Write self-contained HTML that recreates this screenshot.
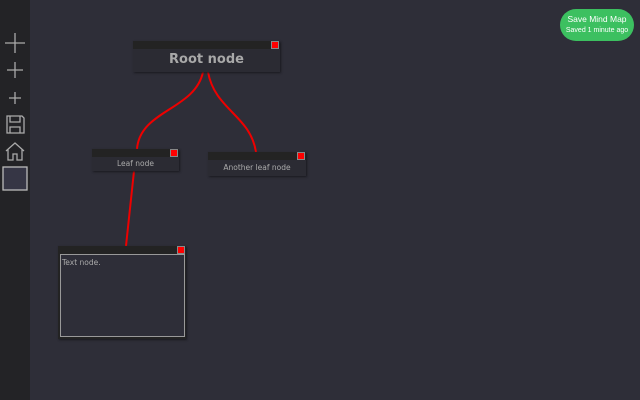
<!DOCTYPE html><html><head><style>
body{margin:0;width:640px;height:400px;background:#2e2e38;position:relative;overflow:hidden;font-family:"DejaVu Sans","Liberation Sans",sans-serif}
.sb{position:absolute;left:0;top:0;width:30px;height:400px;background:#232326}
.n{position:absolute;background:#2b2b33;box-shadow:1px 1px 2px #1a1a1f}
.h{height:8px;background:#232323;position:relative}
.x{position:absolute;right:1px;top:0;width:6px;height:6px;background:#f00;border:1px solid #888}
.t{color:#aaa;text-align:center}
</style></head><body>
<div class="sb"></div>
<svg width="30" height="200" style="position:absolute;left:0;top:0">
<g stroke="#aaa" stroke-width="1.3" fill="none">
<path d="M5 43H25M15 33V53"/><path d="M7 70H23M15 62V78"/><path d="M9 98H21M15 92V104"/>
<path d="M7 116H22L24 118V133H7Z M10 116V122H20V116 M10 133V127H20V133"/>
<path d="M6 151L15 143L24 151M8 149V160H13V154H17V160H22V149"/>
</g>
<rect x="3" y="167" width="24" height="23" fill="#363645" stroke="#bbb" stroke-width="1.3"/>
</svg>
<svg width="640" height="400" style="position:absolute;left:0;top:0">
<g stroke="#e00" stroke-width="2" fill="none">
<path d="M203 72C195 110 140 110 137 149"/>
<path d="M208 72C215 110 250 115 256 152"/>
<path d="M134 171L126 246"/>
</g></svg>
<div class="n" style="left:133px;top:41px;width:147px;height:31px"><div class="h"><div class="x"></div></div><div class="t" style="font-size:13px;font-weight:bold;line-height:22px;color:#a8a8a8">Root node</div></div>
<div class="n" style="left:92px;top:149px;width:87px;height:22px"><div class="h"><div class="x"></div></div><div class="t" style="font-size:7.5px;line-height:13px">Leaf node</div></div>
<div class="n" style="left:208px;top:152px;width:98px;height:24px"><div class="h"><div class="x"></div></div><div class="t" style="font-size:7.5px;line-height:16px">Another leaf node</div></div>
<div class="n" style="left:58px;top:246px;width:128px;height:93px;background:#232323"><div class="h"><div class="x"></div></div>
<div style="position:absolute;left:2px;top:8px;width:125px;height:83px;border:1px solid #999;background:#2e2e38;color:#aaa;font-size:7.5px;padding:3px 1px;box-sizing:border-box">Text node.</div></div>
<div style="position:absolute;left:560px;top:9px;width:74px;height:32px;background:#3cc060;border-radius:16px;color:#fff;text-align:center;font-family:'Liberation Sans',sans-serif">
<div style="font-size:8.5px;margin-top:5px">Save Mind Map</div><div style="font-size:7px;margin-top:3px">Saved 1 minute ago</div></div>
</body></html>
